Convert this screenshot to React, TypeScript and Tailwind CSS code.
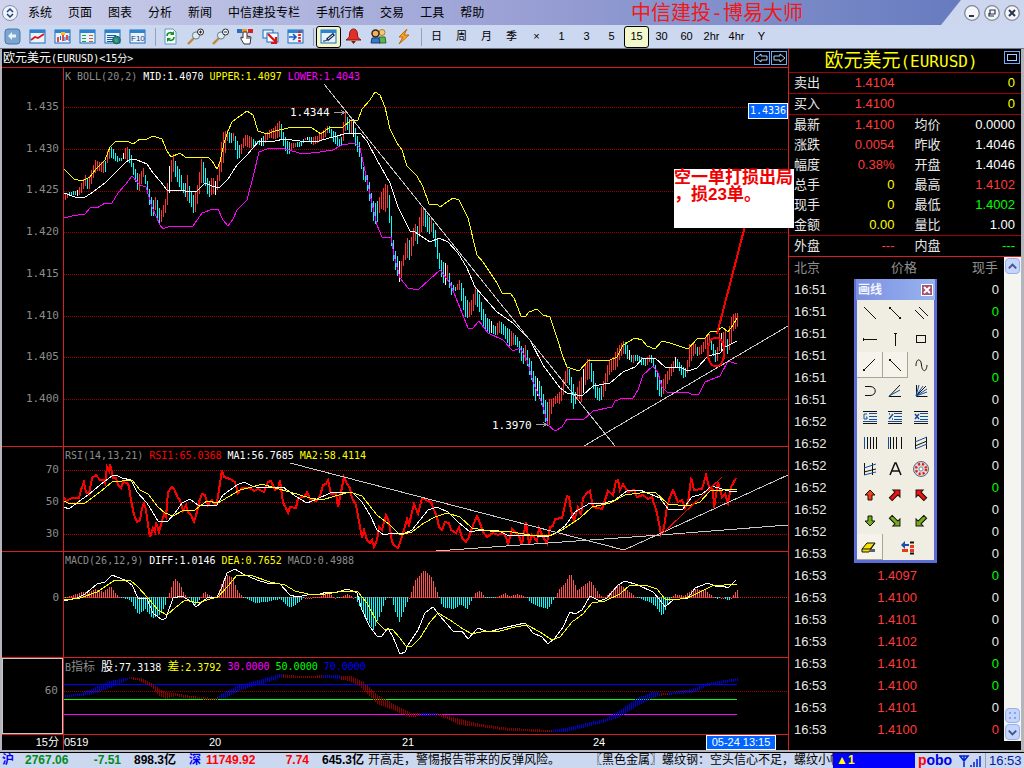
import React from "react";

const SANS = "font-['Liberation_Sans','Noto_Sans_CJK_SC',sans-serif]";
const MONO = "font-['DejaVu_Sans_Mono','Noto_Sans_CJK_SC',monospace]";

type Point = number[];

const toPoints = (text: string): Point[] =>
  text.split(" ").map((pair) => pair.split(",").map(Number));

// fills in one value set for every second pixel between the given points
const sample = (points: Point[]) => {
  const result: Point[] = [];
  let i = 0;
  for (let x = 65; x <= 737; x += 2) {
    while (i < points.length - 2 && points[i + 1][0] < x) i++;
    const a = points[i];
    const b = points[i + 1];
    const t = Math.max(0, Math.min(1, (x - a[0]) / (b[0] - a[0])));
    result.push([x, ...a.slice(1).map((v, k) => v + (b[k + 1] - v) * t)]);
  }
  return result;
};

const UPPER =
  "64,169 74,179 82,181 90,177 95,170 105,160 110,147 115,142 127,141 133,144 140,139 147,139 153,136 162,139 167,151 171,157 180,153 185,157 200,158 208,157 212,161 217,169 220,162 224,143 228,131 232,122 240,116 247,111 253,115 258,131 267,134 275,131 288,128 300,127 312,128 321,134 330,127 343,127 350,121 358,120 362,109 370,100 375,92 380,95 385,107 390,129 397,143 402,150 407,166 417,176 423,187 429,204 437,204 440,207 447,202 453,198 459,200 468,218 477,255 483,262 497,283 502,293 510,293 514,298 521,316 526,316 529,312 537,309 543,315 550,317 557,338 563,357 567,367 579,371 589,360 610,360 617,357 623,345 635,338 642,340 647,346 655,349 662,341 670,343 688,349 698,338 705,338 710,332 717,331 722,327 728,332 733,325 737,318";
const MID =
  "64,193 75,197 85,197 90,194 97,189 105,183 115,173 125,163 130,159 137,160 147,164 153,173 160,181 167,190 180,190 190,192 197,191 205,183 212,186 219,188 228,179 237,165 247,155 258,142 275,141 284,139 300,141 315,142 333,137 348,133 360,133 367,141 377,160 390,183 398,207 410,231 415,232 430,242 439,238 448,242 458,253 467,268 475,287 497,312 513,323 530,340 543,365 560,388 567,393 582,396 593,386 610,383 623,372 635,367 643,358 655,358 665,367 682,368 688,371 697,368 708,356 720,353 725,347 737,341";
const LOWER =
  "64,218 72,216 85,214 91,207 97,208 105,203 112,203 118,193 125,185 132,176 140,185 146,187 152,207 160,225 163,229 170,226 193,226 202,213 213,209 218,209 223,220 228,226 233,219 237,210 247,200 253,177 259,152 267,149 282,148 292,151 303,154 320,152 333,150 342,145 355,143 360,148 367,180 372,203 377,225 382,237 391,237 394,255 400,278 408,288 418,290 430,279 440,270 450,283 460,308 468,328 473,328 479,321 488,333 503,340 513,351 520,348 527,360 533,382 542,403 548,425 555,431 562,427 567,419 583,420 593,411 612,407 615,401 623,398 633,398 638,390 643,375 653,366 658,373 662,387 667,392 687,392 693,395 699,394 705,382 720,376 728,361 737,364";
// x, high, low
const PRICES =
  "65,193,198 78,188,194 81,182,193 85,175,187 88,180,190 95,161,174 100,163,170 105,160,172 108,145,161 112,146,157 118,157,162 121,158,162 126,147,157 130,152,164 134,168,180 138,176,192 143,167,178 147,180,193 150,192,211 152,200,218 155,196,210 157,199,222 160,213,226 162,208,217 166,198,210 168,170,200 173,155,172 176,165,178 180,170,190 184,186,196 187,174,200 190,190,203 194,195,217 197,185,205 201,160,182 204,165,182 208,184,200 212,177,192 216,182,195 219,160,182 222,131,168 227,129,140 230,132,145 234,133,141 236,140,158 240,148,156 244,136,147 250,137,147 256,141,146 262,136,145 268,130,140 274,128,138 280,121,137 284,137,150 288,143,154 294,142,149 300,140,145 306,136,141 312,138,143 318,137,144 322,132,140 328,125,131 332,130,142 336,131,144 340,140,146 342,131,146 344,111,138 346,112,125 348,122,133 350,117,131 353,120,137 356,134,152 360,146,158 362,165,178 365,172,182 368,176,197 371,192,212 374,203,223 377,200,222 380,193,210 385,184,211 388,186,205 390,205,240 393,241,262 395,252,270 400,265,283 403,255,267 406,237,258 410,240,260 414,222,240 417,225,245 421,207,231 424,210,222 428,218,236 431,219,233 434,227,240 437,240,258 440,260,275 444,262,288 448,264,277 450,279,296 455,286,292 459,280,289 462,285,305 465,297,318 468,304,320 472,300,312 475,287,304 478,291,310 482,305,324 486,316,332 490,318,334 494,326,335 499,321,332 504,326,338 508,330,345 513,334,345 518,338,349 522,348,364 526,342,360 528,355,375 531,360,380 534,375,402 537,378,395 540,383,402 543,395,415 546,405,425 549,400,424 552,400,410 556,394,403 560,390,402 563,378,395 566,365,383 569,368,385 572,380,410 575,392,404 578,385,400 581,378,402 584,366,386 588,358,378 592,365,385 595,382,397 598,388,400 602,384,402 605,372,392 608,360,375 612,360,370 616,350,372 620,345,355 624,342,352 627,346,360 631,355,362 636,353,360 641,356,366 646,357,364 650,354,362 654,362,372 658,378,394 662,383,398 665,375,390 670,365,376 675,356,368 678,359,370 682,365,376 686,368,377 689,345,368 694,344,352 698,350,356 702,345,355 706,334,346 709,333,342 712,340,354 716,352,366 719,332,350 722,332,350 725,330,348 727,340,355 730,320,348 733,315,330 737,314,328";

const RSI =
  "64,497 66,501 72,498 79,498 81,490 84,482 86,492 89,494 92,478 96,475 100,480 103,480 105,483 107,467 109,471 110,464 113,478 116,478 118,485 121,488 123,482 127,483 129,486 131,500 134,515 137,522 140,520 142,508 144,503 146,510 148,525 150,537 153,528 155,532 156,522 159,532 162,521 164,514 166,517 168,492 172,487 174,489 178,498 180,500 183,511 186,505 188,512 191,515 194,522 197,512 199,502 202,494 205,495 208,505 212,500 215,505 217,502 219,490 222,470 224,477 230,479 235,482 238,493 242,488 250,488 254,491 258,489 264,492 268,482 271,481 275,490 278,488 280,480 283,503 285,506 288,513 290,507 296,508 298,498 304,497 307,492 310,499 316,501 320,496 323,485 326,484 328,480 331,494 336,494 338,507 341,492 344,477 347,484 350,488 352,498 356,505 360,527 362,538 364,530 367,540 370,543 372,540 374,547 377,540 379,527 382,530 386,515 389,522 392,542 394,545 398,548 401,540 404,530 407,519 409,525 412,512 414,504 418,514 422,498 428,501 431,502 434,510 437,517 439,527 442,530 445,522 449,523 451,530 456,533 459,527 462,538 466,542 469,537 472,528 474,523 477,516 480,523 483,532 487,537 493,533 498,535 503,533 506,537 508,545 512,529 516,533 519,536 522,545 526,522 529,544 532,535 537,541 539,528 543,537 547,543 550,527 553,526 555,519 562,518 565,505 567,496 569,497 571,510 574,521 578,507 581,515 583,498 587,493 590,491 593,507 602,509 605,500 608,491 613,495 616,481 618,480 620,490 623,484 628,492 634,490 637,497 643,495 648,499 652,497 657,513 661,534 664,528 667,507 670,497 673,490 678,502 682,500 685,508 688,503 691,479 692,480 694,490 702,489 706,475 709,487 713,490 714,508 718,482 722,497 725,494 728,503 731,487 736,478";
const RSI_MA1 =
  "64,507 69,509 78,502 88,495 100,485 112,476 116,475 122,478 131,480 137,492 147,503 158,521 167,522 175,513 182,503 190,499 198,505 217,505 223,495 237,485 244,482 252,486 260,488 283,487 295,496 307,503 317,499 330,493 345,492 352,492 362,502 370,515 377,530 384,535 392,533 403,534 412,530 420,520 428,510 437,507 448,512 458,522 470,532 480,530 497,530 507,535 527,535 547,537 557,532 565,526 575,512 590,503 605,503 615,500 628,490 640,490 650,494 660,498 668,509 683,509 692,497 702,494 712,486 722,489 732,492 737,491";
const RSI_MA2 =
  "64,501 70,504 85,503 100,492 112,482 132,480 140,490 148,494 158,507 165,513 173,516 182,511 195,510 207,501 218,503 228,497 240,490 252,487 262,484 275,488 290,492 310,498 322,500 335,496 350,492 362,496 377,515 390,525 400,535 412,532 424,523 435,517 447,513 460,517 472,528 490,531 512,532 530,535 550,536 562,530 580,518 592,507 610,503 625,495 640,493 655,492 668,504 688,506 700,502 710,491 737,489";

const DIFF =
  "64,601 77,598 85,594 97,584 105,582 112,575 117,577 125,580 132,585 138,598 147,599 153,613 162,620 166,618 173,598 182,596 192,602 196,607 202,602 207,598 217,597 222,587 227,573 235,569 243,574 257,580 267,583 280,584 290,595 297,597 307,595 320,594 327,592 337,592 348,589 357,593 362,610 370,627 377,636 382,636 388,628 393,637 400,654 405,652 408,645 418,630 425,613 433,607 440,616 453,631 462,631 468,639 478,628 488,632 507,627 525,623 533,633 542,637 548,644 555,638 563,627 570,612 575,614 582,610 590,596 600,601 607,598 618,585 625,581 638,585 653,592 660,600 665,607 673,600 688,598 695,588 708,583 715,586 723,586 728,588 736,580";
const DEA =
  "64,600 80,598 97,592 115,580 130,580 138,587 148,598 158,610 167,615 175,608 185,600 198,603 210,599 218,597 228,586 237,575 250,575 270,582 285,585 295,591 308,594 325,594 345,591 358,592 367,603 377,622 385,630 392,629 400,638 406,646 412,646 420,638 430,622 438,613 450,620 463,629 472,634 485,631 500,631 515,627 527,625 540,632 552,640 560,637 572,622 583,614 592,603 605,601 620,594 630,585 645,585 657,589 665,599 675,600 690,597 700,592 712,586 737,584";
const MACD =
  "65,0 70,2 82,6 90,6 94,9 103,6 110,12 116,4 120,0 130,-3 138,-18 145,-12 152,-21 160,-18 165,-8 168,2 174,20 180,14 184,4 190,-2 194,-9 199,-3 204,7 210,2 217,0 220,12 226,24 232,20 237,8 243,0 254,-6 265,-5 280,-2 288,-10 294,-9 304,0 318,1 327,5 337,-1 348,4 355,-1 362,-15 373,-33 380,-18 386,0 391,0 394,-12 399,-25 405,-10 410,3 415,18 424,28 432,20 438,3 442,-10 454,-12 460,-7 467,-12 475,5 480,7 485,0 495,0 505,5 509,2 517,4 526,1 530,-6 540,-10 548,-12 555,0 558,8 565,15 570,25 577,8 583,12 590,18 598,5 604,0 612,8 618,14 626,9 634,2 640,-2 650,-5 656,-10 662,-19 668,-6 674,4 684,2 692,9 705,8 716,-2 722,1 728,-4 736,8";

// x, top, bottom
const BAND =
  "66,695,696 80,693,695 93,688,693 110,681,687 130,677,678 140,678,680 150,682,685 158,688,694 166,692,698 175,693,695 190,696,698 215,698,699 225,692,697 240,685,689 250,682,686 265,678,682 280,674,677 300,676,677 330,675,677 350,676,680 358,679,684 367,685,693 377,695,703 390,702,708 397,706,711 410,713,716 437,713,714 460,719,724 480,724,726 510,728,730 550,730,731 565,728,731 590,722,725 605,719,721 620,710,716 637,698,705 652,692,697 665,693,694 680,691,693 695,688,691 707,683,685 720,681,683 736,678,680";
const BAND_DOWN = [
  [131, 218],
  [283, 322],
  [341, 420],
  [439, 552],
  [660, 668],
];

const candles = sample(toPoints(PRICES)).map(([x, high, low], i, all) => {
  const prev = all[Math.max(0, i - 1)];
  const move = high + low - prev[1] - prev[2];
  const noise = Math.sin(i * 12.9) * 3;
  let color = move + noise > 0 ? "#00ffff" : "#ff3232";
  if (i % 23 === 6) color = "#ffffff";
  return { x, high: high + noise * 0.5, low: low + Math.cos(i * 7.3) * 1.5, color };
});

const Line = ({ points, color, width = 1 }: { points: string; color: string; width?: number }) => (
  <polyline points={points} fill="none" stroke={color} strokeWidth={width} />
);

const Rule = ({ y, color = "#9c0000", dotted = true, to = 788 }: { y: number; color?: string; dotted?: boolean; to?: number }) => (
  <line x1="64" x2={to} y1={y + 0.5} y2={y + 0.5} stroke={color} strokeDasharray={dotted ? "1 1" : undefined} />
);

type LabelProps = { parts: [string, string][] };

const Legend = ({ parts }: LabelProps) => (
  <div className={`absolute left-px top-px flex gap-[6px] text-[10px] leading-4 whitespace-pre ${MONO}`}>
    {parts.map(([text, color]) => (
      <span key={text} className={color}>
        {text.split(/([\u4e00-\u9fff]+)/).map((part, i) =>
          i % 2 ? (
            <span key={i} className="text-xs leading-4">
              {part}
            </span>
          ) : (
            part
          )
        )}
      </span>
    ))}
  </div>
);

type PanelProps = {
  axis: string[];
  axisClass: string;
  viewBox: string;
  legend: [string, string][];
  children: React.ReactNode;
};

const Panel = ({ axis, axisClass, viewBox, legend, children }: PanelProps) => (
  <div className="flex min-h-0 border-b border-[#d81e1e]">
    <div
      className={`flex w-[61px] shrink-0 flex-col justify-between pr-1 text-right text-[11px] leading-4 text-[#8c8c8c] ${MONO} ${axisClass}`}
    >
      {axis.map((label) => (
        <span key={label}>{label}</span>
      ))}
    </div>
    <div className="relative min-w-0 flex-1 border-l border-[#d81e1e]">
      <svg className="block h-full w-full" viewBox={viewBox} preserveAspectRatio="none" shapeRendering="crispEdges">
        {children}
      </svg>
      <Legend parts={legend} />
    </div>
  </div>
);

const MENU = ["系统", "页面", "图表", "分析", "新闻", "中信建投专栏", "手机行情", "交易", "工具", "帮助"];

const TopBar = () => (
  <header className="flex h-[25px] shrink-0 bg-linear-to-r from-[#d0d4ec] via-[#9aa0d4] to-[#5f76bc]">
    <nav className="flex items-center gap-4 pl-[2px] text-xs">
      <svg className="-mr-1.5 size-4 shrink-0" viewBox="0 0 16 16">
        <circle cx="8" cy="8" r="7.5" fill="#eef2fa" stroke="#8090a8" />
        <path d="M5 7l3-3 3 3M5 9l3 3 3-3" fill="none" stroke="#20407c" strokeWidth="1.5" />
      </svg>
      {MENU.map((item) => (
        <button key={item} className="whitespace-nowrap">
          {item}
        </button>
      ))}
    </nav>
    <h1 className="ml-auto flex items-center pr-[138px] text-xl leading-6 whitespace-nowrap text-[#f01818]">
      中信建投<span className={MONO}>-</span>博易大师
    </h1>
    <div className="flex w-[83px] shrink-0 items-center justify-end gap-1 bg-[#ccd6ee] pr-1 [clip-path:polygon(24%_0,100%_0,100%_100%,0_100%)]">
      {["M5 11h5", "M6 5h5v4h-5zM5 8v3h5", "M5 5l6 6M11 5l-6 6"].map((d, i) => (
        <button key={d} aria-label={["最小化", "还原", "关闭"][i]}>
          <svg className="size-4" viewBox="0 0 16 16">
            <circle cx="8" cy="8" r="7.3" fill="#f4f6fa" stroke="#808898" strokeWidth="1.3" />
            <path d={d} fill="none" stroke="#28344c" strokeWidth={i === 1 ? 1.2 : 2} />
          </svg>
        </button>
      ))}
    </div>
  </header>
);

const frame = (
  <>
    <rect x="1" y="2" width="15" height="13" fill="#e8f2fc" stroke="#1c6cb8" />
    <rect x="1" y="2" width="15" height="3" fill="#2c84d0" />
  </>
);

const magnifier = (
  <>
    <path d="M1 16l6-6" stroke="#c08838" strokeWidth="2.4" />
    <circle cx="9" cy="7.5" r="3.6" fill="#d8ecf4" stroke="#707880" />
    <circle cx="13.5" cy="4" r="3" fill="#fff" stroke="#222" />
  </>
);

const TOOLS: Record<string, React.ReactNode> = {
  返回: (
    <>
      <rect x="1" y="1" width="15" height="15" rx="3" fill="#7ca4cc" stroke="#4878ac" />
      <path d="M8 4L4 8l4 4v-2.500h4V6.500H8z" fill="#e8f4fc" />
    </>
  ),
  走势: (
    <>
      {frame}
      <path d="M2 12l4-3 3 1 6-4" fill="none" stroke="#e01010" strokeWidth="1.600" />
    </>
  ),
  K线: (
    <>
      {frame}
      <path d="M4 9v5M9 7v6M13 7v5" stroke="#e02020" strokeWidth="1.600" />
      <path d="M6.500 8v4M11 9v4M15 8v5" stroke="#2060c8" />
      <path d="M7 4h4v3H7z" fill="#f0c020" />
    </>
  ),
  报价: (
    <>
      {frame}
      <path d="M3 7.500h4M3 10.500h4M3 13.500h4" stroke="#20a040" />
      <path d="M10 7.500h4M10 10.500h4M10 13.500h4" stroke="#d06020" />
    </>
  ),
  资讯: (
    <>
      {frame}
      <path d="M3 7.500h9M3 9.500h6M3 11.500h6M3 13.500h6" stroke="#1858a8" />
      <circle cx="12.500" cy="12" r="3.800" fill="#2878c8" stroke="#186030" />
      <path d="M10 11l3-1 1 3-2 2z" fill="#40b040" />
    </>
  ),
  F10: (
    <>
      {frame}
      <text x="2" y="13" fontSize="8" fill="#103878" fontFamily="Liberation Sans">
        F10
      </text>
    </>
  ),
  刷新: (
    <>
      <path d="M3 1h8l3 3v12H3z" fill="#f8fcf8" stroke="#5898c8" />
      <path d="M5 8c0-4 5-4 6-2M12 9c0 4-5 4-6 2" fill="none" stroke="#189028" strokeWidth="1.600" />
      <path d="M12 3v4H8zM5 14v-4h4z" fill="#189028" />
    </>
  ),
  放大: (
    <>
      {magnifier}
      <path d="M12 4h3M13.500 2.500v3" stroke="#222" />
    </>
  ),
  缩小: (
    <>
      {magnifier}
      <path d="M12 4h3" stroke="#222" />
    </>
  ),
  手型: (
    <>
      <rect x="0" y="1" width="5" height="4" fill="#2c6cc0" />
      <rect x="5" y="1" width="5" height="4" fill="#e8a020" />
      <rect x="11" y="1" width="5" height="4" fill="#d82020" />
      <path d="M6 4v6l-2-1v2l3 5h6l1-7-4-1V4z" fill="#fff" stroke="#333" />
      <path d="M10 8v3M12 9v2" stroke="#333" />
    </>
  ),
  转移: (
    <>
      <rect x="1" y="2" width="10" height="8" fill="#e8f2fc" stroke="#1c6cb8" />
      <rect x="5" y="5" width="11" height="9" fill="#fff" stroke="#1c6cb8" />
      <path d="M6 6l8 8M14 9v6H9" fill="none" stroke="#e01010" strokeWidth="2.200" />
    </>
  ),
  侧栏: (
    <>
      {frame}
      <path d="M2 9h6M6 6l3 3-3 3" fill="none" stroke="#1858c8" strokeWidth="1.600" />
      <path d="M12.500 3v12" stroke="#e02020" strokeWidth="2.600" strokeDasharray="2 1" />
    </>
  ),
  画线工具: (
    <>
      {frame}
      <path d="M3 13h2l2-1" fill="none" stroke="#102858" />
      <path d="M7 12l7-6" stroke="#102858" strokeWidth="3" />
      <path d="M8 11l5-4" stroke="#fff" />
    </>
  ),
  预警: (
    <>
      <path d="M8.500 1c-3 0-4 3-4 6 0 2-1 3-3.500 5h15c-2.500-2-3.500-3-3.500-5 0-3-1-6-4-6z" fill="#e03028" stroke="#901008" />
      <path d="M6 13h5l-2.500 3z" fill="#702008" />
    </>
  ),
  用户: (
    <>
      <circle cx="12" cy="4.500" r="3" fill="#f0c878" stroke="#b08020" />
      <path d="M9 9h6l1 6H9z" fill="#60b050" stroke="#287020" />
      <circle cx="5.500" cy="5.500" r="3.500" fill="#f0b060" stroke="#302010" strokeWidth="1.400" />
      <path d="M1 15l1-5h7l1 5z" fill="#3878c8" stroke="#183c78" />
    </>
  ),
  闪电: <path d="M12 1L4 9h4l-4 7 10-9H9z" fill="#f8a818" stroke="#c06808" />,
};

const ToolButton = ({ name, active = false }: { name: string; active?: boolean }) => (
  <button
    aria-label={name}
    className={`flex h-[22px] w-[25px] shrink-0 items-center justify-center ${
      active ? "rounded-[3px] border border-black bg-[#f2f8cc]" : ""
    }`}
  >
    <svg className="size-[17px] shrink-0" viewBox="0 0 17 17">
      {TOOLS[name]}
    </svg>
  </button>
);

const Separator = () => <span className="flex h-[18px] w-2 shrink-0 justify-center border-l-[3px] border-transparent before:w-px before:bg-[#98a0b4]" />;

const PERIODS = ["日", "周", "月", "季", "×", "1", "3", "5", "15", "30", "60", "2hr", "4hr", "Y"];

const ToolBar = () => {
  const names = Object.keys(TOOLS);
  return (
    <div className="flex h-6 shrink-0 items-center border-b border-[#707888] bg-[#ccd8f0]">
      {names.slice(0, 6).map((name) => (
        <ToolButton key={name} name={name} />
      ))}
      <Separator />
      {names.slice(6, 12).map((name) => (
        <ToolButton key={name} name={name} />
      ))}
      <Separator />
      {names.slice(12).map((name) => (
        <ToolButton key={name} name={name} active={name === "画线工具"} />
      ))}
      <Separator />
      {PERIODS.map((period) => (
        <button
          key={period}
          className={`flex h-[22px] w-[25px] shrink-0 items-center justify-center text-[11px] ${
            period === "15" ? "rounded-[3px] border border-black bg-[#f2f8cc]" : ""
          }`}
        >
          {period}
        </button>
      ))}
    </div>
  );
};

const Charts = () => (
  <section className="relative grid min-w-0 flex-1 grid-rows-[19px_379fr_105fr_106fr_77fr_15px] border-r border-[#d81e1e]">
    <div className="flex items-center justify-between border-b border-[#d81e1e] pl-px text-xs text-white">
      <h2>
        欧元美元<span className={`text-[10px] ${MONO}`}>(EURUSD)&lt;15分&gt;</span>
      </h2>
      <div className="flex gap-px pr-px">
        {["M1 5l5-4v2h6v4H6v2z", "M13 5l-5-4v2H2v4h6v2z"].map((d, i) => (
          <button key={d} aria-label={i ? "向右" : "向左"} className="border border-[#68acf8]">
            <svg className="h-3 w-[14px]" viewBox="0 -1 14 12">
              <path d={d} fill="none" stroke="#a8d0ff" />
            </svg>
          </button>
        ))}
      </div>
    </div>

    <Panel
      axis={["1.435", "1.430", "1.425", "1.420", "1.415", "1.410", "1.405", "1.400"]}
      axisClass="pt-[31px] pb-[39px]"
      viewBox="64 68 724 378"
      legend={[
        ["K", "text-[#8c8c8c]"],
        ["BOLL(20,2)", "text-[#8c8c8c]"],
        ["MID:1.4070", "text-white"],
        ["UPPER:1.4097", "text-[#ffff00]"],
        ["LOWER:1.4043", "text-[#ff00ff]"],
      ]}
    >
      {[107, 149, 191, 232, 274, 316, 357, 399].map((y) => (
        <Rule key={y} y={y} />
      ))}
      {candles.map((c) => (
        <rect key={c.x} x={c.x} y={c.high} width="1" height={c.low - c.high} fill={c.color} />
      ))}
      <Line points={UPPER} color="#ffff00" />
      <Line points={MID} color="#ffffff" />
      <Line points={LOWER} color="#ff00ff" />
      <Line points="324,84 615,446" color="#c8c8c8" />
      <Line points="584,446 788,326" color="#c8c8c8" />
      <g fill="#fff" fontSize="11" className={MONO}>
        <text x="290" y="116">
          1.4344
        </text>
        <text x="492" y="429">
          1.3970
        </text>
      </g>
      <path d="M334 112.500h10M341 110l3 2.500-3 2.500M536 424.500h10M543 422l3 2.500-3 2.500" fill="none" stroke="#a0a0a0" />
      <path d="M745 226L717 334" stroke="#ff0000" strokeWidth="2" />
      <ellipse cx="716" cy="352" rx="8.500" ry="14.500" fill="none" stroke="#ff0000" strokeWidth="2" />
    </Panel>

    <Panel
      axis={["70", "50", "30"]}
      axisClass="pt-[15px] pb-[9px]"
      viewBox="64 447 724 104"
      legend={[
        ["RSI(14,13,21)", "text-[#8c8c8c]"],
        ["RSI1:65.0368", "text-[#ff0000]"],
        ["MA1:56.7685", "text-white"],
        ["MA2:58.4114", "text-[#ffff00]"],
      ]}
    >
      {[470, 502, 534].map((y) => (
        <Rule key={y} y={y} color="#c00000" />
      ))}
      <Line points={RSI} color="#ff0000" width={2} />
      <Line points={RSI_MA1} color="#ffffff" />
      <Line points={RSI_MA2} color="#ffff00" />
      <Line points="290,463 390,489 624,550 788,475" color="#c8c8c8" />
      <Line points="436,551 660,535 788,525" color="#c8c8c8" />
      <Line points="661,535 722,477" color="#ff0000" />
    </Panel>

    <Panel
      axis={["0"]}
      axisClass="pt-[38px]"
      viewBox="64 552 724 105"
      legend={[
        ["MACD(26,12,9)", "text-[#8c8c8c]"],
        ["DIFF:1.0146", "text-white"],
        ["DEA:0.7652", "text-[#ffff00]"],
        ["MACD:0.4988", "text-[#8c8c8c]"],
      ]}
    >
      <Rule y={597} color="#d02020" />
      {sample(toPoints(MACD)).map(([x, h]) => (
        <rect
          key={x}
          x={x}
          y={h > 0 ? 598 - h : 597}
          width="1"
          height={Math.max(1, Math.abs(h))}
          fill={h > 0 ? "#ff5050" : "#00ffff"}
        />
      ))}
      <Line points={DIFF} color="#ffffff" />
      <Line points={DEA} color="#ffff00" />
    </Panel>

    <Panel
      axis={["60"]}
      axisClass="border border-[#c8c8c8] pt-6"
      viewBox="64 658 724 76"
      legend={[
        ["B指标", "text-[#8c8c8c]"],
        ["股:77.3138", "text-white"],
        ["差:2.3792", "text-[#ffff00]"],
        ["30.0000", "text-[#ff00ff]"],
        ["50.0000", "text-[#00ff00]"],
        ["70.0000", "text-[#0000ff]"],
      ]}
    >
      <Rule y={691} />
      <Rule y={684} color="#0000ff" dotted={false} to={737} />
      <Rule y={699} color="#00ff00" dotted={false} to={737} />
      <Rule y={714} color="#ff00ff" dotted={false} to={737} />
      {sample(toPoints(BAND)).map(([x, top, bottom]) => (
        <rect
          key={x}
          x={x}
          y={top}
          width="1"
          height={bottom - top + 1}
          fill={BAND_DOWN.some(([a, b]) => x >= a && x <= b) ? "#900000" : "#0000d8"}
        />
      ))}
    </Panel>

    <div className={`flex text-[11px] leading-[15px] text-white ${SANS}`}>
      <span className="w-[61px] shrink-0 pr-1 text-right">15分</span>
      <div className="flex min-w-0 flex-1 border-l border-[#d81e1e]">
        <span className="flex-[145]">0519</span>
        <span className="flex-[193]">20</span>
        <span className="flex-[191]">21</span>
        <span className="flex-[113]">24</span>
        <span className="w-[70px] border border-white bg-[#0064ff] text-center leading-[13px] whitespace-nowrap">05-24 13:15</span>
        <span className="flex-[12]" />
      </div>
    </div>

    <span className={`absolute top-[54px] right-0 border border-white bg-[#0064ff] px-px text-[10px] leading-[14px] text-white ${MONO}`}>
      1.4336
    </span>
    <p className="absolute top-[120px] right-[-6px] z-10 h-[59px] w-[120px] bg-white text-[17px] leading-[17px] font-bold whitespace-pre text-[#f00000]">
      空一单打损出局{"\n"}，损23单。
    </p>
  </section>
);

const RED = "text-[#ff3c3c]";
const GREEN = "text-[#00ff00]";
const YELLOW = "text-[#ffff00]";

const QUOTES: string[][] = [
  ["最新", "1.4100", RED, "均价", "0.0000", "text-white"],
  ["涨跌", "0.0054", RED, "昨收", "1.4046", "text-white"],
  ["幅度", "0.38%", RED, "开盘", "1.4046", "text-white"],
  ["总手", "0", YELLOW, "最高", "1.4102", RED],
  ["现手", "0", YELLOW, "最低", "1.4002", GREEN],
  ["金额", "0.00", YELLOW, "量比", "1.00", "text-white"],
];

const QuoteRow = ({ row }: { row: string[] }) => (
  <dl className="grid h-5 grid-cols-[50px_1fr_50px_1fr] items-center pr-[6px] pl-[5px]">
    <dt>{row[0]}</dt>
    <dd className={`pr-[10px] text-right ${row[2]}`}>{row[1]}</dd>
    <dt className="pl-[10px]">{row[3]}</dt>
    <dd className={`text-right ${row[5]}`}>{row[4]}</dd>
  </dl>
);

// time, price, volume colour
const TICKS: string[][] = [
  ["16:51", "", ""],
  ["16:51", "", GREEN],
  ["16:51", "", ""],
  ["16:51", "", ""],
  ["16:51", "", GREEN],
  ["16:51", "", ""],
  ["16:52", "", ""],
  ["16:52", "", ""],
  ["16:52", "", ""],
  ["16:52", "", GREEN],
  ["16:52", "", ""],
  ["16:52", "", ""],
  ["16:53", "", ""],
  ["16:53", "1.4097", GREEN],
  ["16:53", "1.4100", ""],
  ["16:53", "1.4101", ""],
  ["16:53", "1.4102", ""],
  ["16:53", "1.4101", GREEN],
  ["16:53", "1.4100", GREEN],
  ["16:53", "1.4101", ""],
  ["16:53", "1.4100", RED],
];

const G = "#101010";
const B = "#1450a0";
const arrow = (color: string, angle: number) => (
  <path
    d={angle % 90 ? "M9 2l5 5h-3v8H7V7H4z" : "M9 4l5 5h-3v5H7V9H4z"}
    fill={color}
    stroke="#181008"
    transform={`rotate(${angle} 9 9)`}
  />
);
const textLines = (
  <>
    <path d="M2 3.500h14M2 15.500h14" stroke={G} />
    <path d="M8 5.500h8M8 8.500h8M8 11.500h8M2 13.500h14" stroke={B} />
  </>
);

const DRAW_TOOLS: Record<string, React.ReactNode> = {
  直线: <path d="M3 3l12 12" stroke={G} />,
  线段: (
    <>
      <path d="M4 4l10 10" stroke={G} />
      <path d="M3 3h2v2H3zM13 13h2v2h-2z" fill={G} />
    </>
  ),
  平行线: <path d="M3 6l9 9M7 3l9 9" stroke={G} />,
  水平线: <path d="M2 9.500h14M2.500 8v3" stroke={G} />,
  垂直线: <path d="M9.500 3v13M8 3.500h3" stroke={G} />,
  矩形: <rect x="4.500" y="5.500" width="9" height="7" fill="none" stroke={G} />,
  上升线: (
    <>
      <path d="M4 14L15 3" stroke={G} />
      <path d="M3 13h2v2H3z" fill={G} />
    </>
  ),
  下降线: (
    <>
      <path d="M4 4l11 11" stroke={G} />
      <path d="M3 3h2v2H3z" fill={G} />
    </>
  ),
  波浪线: <path d="M4 10c0-8 5-8 5.500-1s5 8 5.500 0" fill="none" stroke={G} />,
  弧线: <path d="M4 4.500h5c7 0 7 9 0 9H4" fill="none" stroke={G} />,
  角度线: (
    <>
      <path d="M14 3L3 14.500h12" fill="none" stroke={G} />
      <path d="M3 14l11-6" stroke={B} />
    </>
  ),
  扇形线: (
    <>
      <path d="M4.500 3v11.500h11M4 14L14 4" fill="none" stroke={G} />
      <path d="M4 14L7 3M4 14l7-10M4 14l11-7M4 14l11-4" stroke={B} />
    </>
  ),
  黄金分割: (
    <>
      {textLines}
      <path d="M6 6H3v5h3V9H5" fill="none" stroke={B} />
    </>
  ),
  百分比: (
    <>
      {textLines}
      <path d="M3 11l4-5M3 6h1M6 11h1" stroke={B} strokeWidth="1.500" />
    </>
  ),
  百分比线: (
    <>
      {textLines}
      <path d="M3 6l4 5M3 11l4-5" stroke={B} strokeWidth="1.500" />
    </>
  ),
  周期线: (
    <>
      <path d="M6.500 3v12M9.500 3v12M12.500 3v12M15.500 3v12" stroke={G} />
      <path d="M3.500 3v12" stroke={B} />
    </>
  ),
  斐波那契: (
    <>
      <path d="M4.500 3v12M7.500 3v12M10.500 3v12M15.500 3v12" stroke={G} />
      <path d="M2.500 3v12" stroke={B} />
    </>
  ),
  通道线: (
    <>
      <path d="M3.500 3v12M14.500 3v12M3 12l12-5" stroke={G} />
      <path d="M3 8l12-5M3 15l12-5" stroke={B} />
    </>
  ),
  回归线: (
    <>
      <path d="M3.500 3v12M11.500 3v12M3 12l12-3" stroke={G} />
      <path d="M3 8l12-4M3 15l12-3" stroke={B} />
    </>
  ),
  文字: <path d="M4 15L9 3h1l5 12M6 11h7" fill="none" stroke={G} strokeWidth="1.500" />,
  图案: (
    <>
      <circle cx="9" cy="9" r="7.500" fill="#d8d8d8" stroke="#606880" />
      <circle cx="9" cy="9" r="5" fill="none" stroke="#e02020" strokeWidth="2.500" strokeDasharray="2 2" />
      <circle cx="9" cy="9" r="2" fill="#fff" stroke="#808898" />
    </>
  ),
  向上: arrow("#f04018", 0),
  右上: arrow("#f01010", 45),
  左上: arrow("#f01010", -45),
  向下: arrow("#70b020", 180),
  右下: arrow("#70b020", 135),
  左下: arrow("#70b020", 225),
  橡皮: (
    <>
      <path d="M2 11l5-6h8l-4 6-2 3H2z" fill="#f8e000" stroke={G} />
      <path d="M2 11h8l5-6" fill="none" stroke={G} />
      <path d="M11 11h4v3H9z" fill="#606060" />
    </>
  ),
};

const Palette = () => (
  <div className="absolute top-[230px] left-[65px] w-[83px] border-[3px] border-t-0 border-[#5c6cd4] bg-[#f0eee2]">
    <div className="-mx-px flex h-[21px] items-center justify-between bg-linear-to-r from-[#7c90e0] to-[#98b4f0] px-[2px] text-xs font-bold text-[#f0f4ff]">
      画线
      <button aria-label="关闭画线" className="size-3 border border-white bg-[#a85070]">
        <svg viewBox="0 0 10 10">
          <path d="M2 2l6 6M8 2L2 8" stroke="#fff" strokeWidth="2" />
        </svg>
      </button>
    </div>
    <div className="grid grid-cols-3">
      {Object.entries(DRAW_TOOLS).map(([name, icon]) => (
        <button
          key={name}
          aria-label={name}
          className={`flex h-[26px] items-center justify-center ${
            ["上升线", "下降线", "橡皮"].includes(name) ? "border-r border-b border-[#a8a698] bg-[#f6f4ea]" : ""
          }`}
        >
          <svg className="size-[18px] shrink-0" viewBox="0 0 18 18">
            {icon}
          </svg>
        </button>
      ))}
      <button aria-label="隐藏" className="col-span-2 flex h-[26px] items-center justify-center">
        <svg className="size-[18px]" viewBox="0 0 18 18">
          <path d="M2 7l4-4v3h4v2H6v3z" fill="#1450b0" />
          <path d="M3 11h6v3H3zM11 7h4v3h-4zM11 11h4v3h-4z" fill="#e83818" />
          <path d="M11 4.500h4M11 15.500h4" stroke={G} strokeWidth="2" />
        </svg>
      </button>
    </div>
  </div>
);

const SidePanel = () => (
  <aside className="relative flex w-[232px] shrink-0 flex-col text-[13px] leading-5 text-[#e8e8e8]">
    <h2 className="relative h-6 border-b border-[#a00000] pr-2 text-center text-[19px] leading-6 text-[#ffff00]">
      欧元美元<span className={`text-base ${MONO}`}>(EURUSD)</span>
      <button aria-label="窗口" className="absolute top-[2px] right-px h-[13px] w-4 border border-[#68acf8] p-[2px]">
        <span className="block h-full border border-[#a8d0ff]" />
      </button>
    </h2>
    {[
      ["卖出", "1.4104"],
      ["买入", "1.4100"],
    ].map(([label, value]) => (
      <div key={label} className="h-[21px] border-b border-[#a00000]">
        <QuoteRow row={[label, value, RED, "", "0", YELLOW]} />
      </div>
    ))}
    <div className="border-b border-[#a00000]">
      {QUOTES.map((row) => (
        <QuoteRow key={row[0]} row={row} />
      ))}
    </div>
    <div className="border-b border-[#d81e1e]">
      <QuoteRow row={["外盘", "---", RED, "内盘", "---", GREEN]} />
    </div>
    <div className="flex">
      <table className="flex-1">
        <thead>
          <tr className="h-[22px] text-[#909090]">
            <th className="pl-[5px] text-left font-normal">北京</th>
            <th className="pr-[10px] text-right font-normal">价格</th>
            <th className="pr-[6px] text-right font-normal">现手</th>
          </tr>
        </thead>
        <tbody>
          {TICKS.map(([time, price, color], i) => (
            <tr key={i} className="h-[22px]">
              <td className="w-[62px] p-0 pl-[5px]">{time}</td>
              <td className={`w-[76px] p-0 pr-[10px] text-right ${RED}`}>{price}</td>
              <td className={`p-0 pr-[5px] text-right ${color}`}>0</td>
            </tr>
          ))}
        </tbody>
      </table>
      <div className="flex w-[17px] flex-col justify-between bg-[#f4f4f0]">
        <button aria-label="上滚" className="m-px h-4 rounded-sm border border-[#98b0e8] bg-[#c4d4fc]">
          <svg viewBox="0 0 14 14">
            <path d="M3 9l4-4 4 4" fill="none" stroke="#405488" strokeWidth="2" />
          </svg>
        </button>
        <div>
          <div className="mx-px h-[15px] rounded-sm border border-[#98b0e8] bg-[#c4d4fc] p-[3px]">
            <div className="h-full border-y-2 border-dotted border-[#88a4e8]" />
          </div>
          <button aria-label="下滚" className="m-px block h-4 w-[15px] rounded-sm border border-[#98b0e8] bg-[#c4d4fc]">
            <svg viewBox="0 0 14 14">
              <path d="M3 5l4 4 4-4" fill="none" stroke="#405488" strokeWidth="2" />
            </svg>
          </button>
        </div>
      </div>
    </div>
    <Palette />
  </aside>
);

const StatusBar = () => (
  <footer className="flex h-4 shrink-0 items-center border-t border-black bg-[#ccd8f0] text-xs leading-[15px] whitespace-nowrap">
    <div className="flex shrink-0 pl-[2px] font-bold">
      <span className="w-[23px] text-[#0000ff]">沪</span>
      <span className="w-11 text-[#008c1c]">2767.06</span>
      <span className="w-[52px] text-right text-[#008c1c]">-7.51</span>
      <span className="w-[55px] text-right">898.3亿</span>
      <span className="w-[30px] pl-[13px] text-[#0000ff]">深</span>
      <span className="w-[52px] text-[#ff0000]">11749.92</span>
      <span className="w-[51px] text-right text-[#ff0000]">7.74</span>
      <span className="w-[55px] text-right">645.3亿</span>
    </div>
    <div className="flex min-w-0 flex-1 gap-[30px] overflow-hidden pl-1">
      <span>开高走，警惕报告带来的反弹风险。</span>
      <span className="min-w-0 overflow-hidden">〖黑色金属〗螺纹钢：空头信心不足，螺纹小幅</span>
    </div>
    <div className="w-[82px] shrink-0 bg-[#0000ff] pl-[3px] font-bold text-[#ffff00]">▲1</div>
    <div className="w-10 shrink-0 text-center text-[14px] font-bold text-[#0000e0]">
      <span className="text-[#ff0000]">p</span>obo
    </div>
    <svg className="mx-1 h-3 w-[22px] shrink-0" viewBox="0 0 22 12">
      <path d="M1 1h8L5 6zM5 1v11M12 12v-2M15 12V7M18 12V4M21 12V1" fill="none" stroke="#0020d8" strokeWidth="1.500" />
    </svg>
    <time className="w-[39px] shrink-0 border-l border-[#98a0b4] pl-[3px] text-[13px] text-[#0020a0]">16:53</time>
  </footer>
);

const App = () => {
  return (
    <div className={`flex h-screen flex-col overflow-hidden bg-black text-black ${SANS}`}>
      <TopBar />
      <ToolBar />
      <main className="flex min-h-0 flex-1 border-x-2 border-r-[3px] border-b-2 border-[#b4b4bc]">
        <Charts />
        <SidePanel />
      </main>
      <StatusBar />
    </div>
  );
};

export default App;
